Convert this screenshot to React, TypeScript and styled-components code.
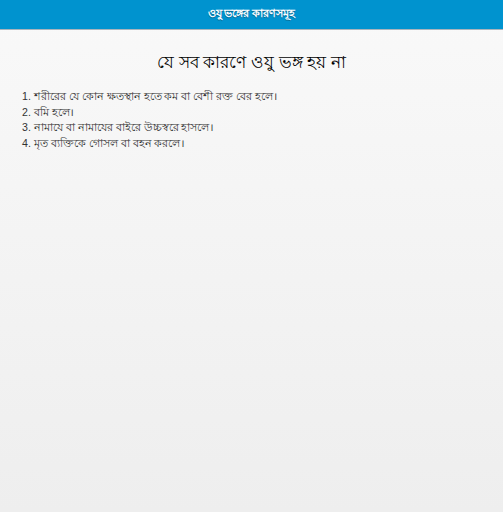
import React from "react";
import styled, { createGlobalStyle } from "styled-components";

const Global = createGlobalStyle`
  html, body { margin: 0; padding: 0; }
  body {
    font-family: "Liberation Sans", "Noto Sans", sans-serif;
    background: #eeeeee;
  }
`;

const Page = styled.div`
  min-height: 512px;
  background: linear-gradient(#f9f9f9, #eeeeee);
  display: flex;
  flex-direction: column;
`;

const Header = styled.header`
  height: 29px;
  background: #0093cf;
  border-bottom: 1px solid #a8b4bd;
  display: flex;
  align-items: center;
  justify-content: center;
  color: #ffffff;
  font-weight: bold;
  font-size: 10.5px;
  text-shadow: 0 1px 0 #0a6a94;
`;

const Content = styled.main`
  padding: 21px 22px;
`;

const Title = styled.h1`
  margin: 0 0 14px;
  text-align: center;
  font-size: 17px;
  line-height: 24px;
  font-weight: normal;
  color: #000;
`;

const List = styled.ol`
  margin: 0;
  padding: 0;
  list-style-position: inside;
  color: #333;
  font-size: 10.6px;
  line-height: 15.7px;
`;

const Item = styled.li``;

const items = [
  "শরীরের যে কোন ক্ষতস্থান হতে কম বা বেশী রক্ত বের হলে।",
  "বমি হলে।",
  "নামাযে বা নামাযের বাইরে উচ্চস্বরে হাসলে।",
  "মৃত ব্যক্তিকে গোসল বা বহন করলে।",
];

export default function App() {
  return (
    <>
      <Global />
      <Page>
        <Header>ওযু ভঙ্গের কারণসমূহ</Header>
        <Content>
          <Title>যে সব কারণে ওযু ভঙ্গ হয় না</Title>
          <List>
            {items.map((t) => (
              <Item key={t}>{t}</Item>
            ))}
          </List>
        </Content>
      </Page>
    </>
  );
}
